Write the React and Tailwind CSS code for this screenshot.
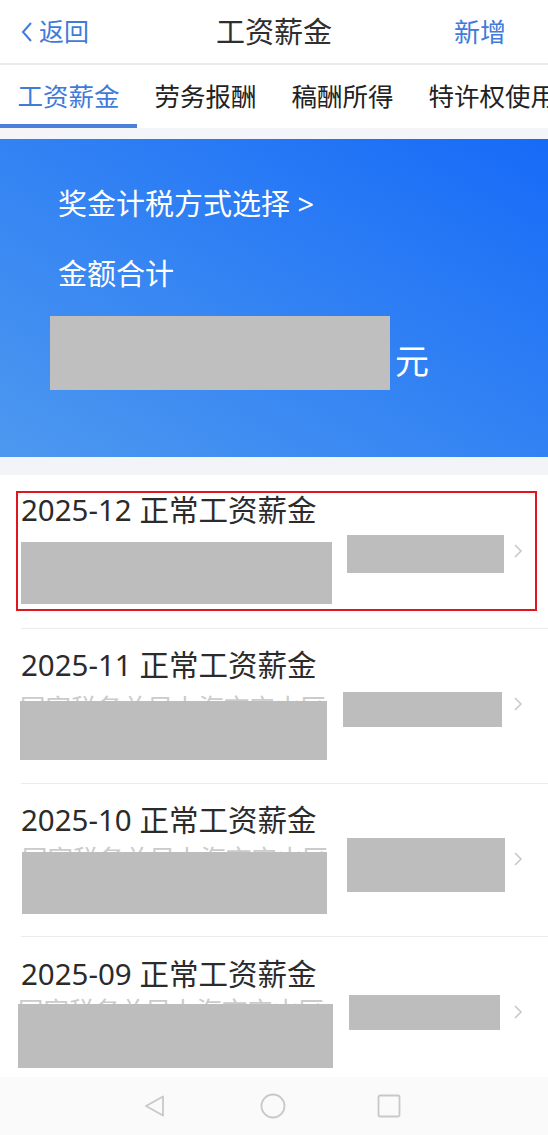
import React from "react";

const font = { fontFamily: '"Noto Sans", "Noto Sans CJK SC", sans-serif' };

const tabs = ["工资薪金", "劳务报酬", "稿酬所得", "特许权使用费所得"];

// per-row spacing of the masked cells
const rows = [
  {
    month: "2025-12",
    wrap: "h-[153px] pt-[20px]",
    peek: false,
    col: "mt-[17px] ml-0",
    left: "w-[311px] h-[62px]",
    right: "mt-[10px] ml-[15px] w-[157px] h-[38px]",
    arrow: "mt-[18px]",
  },
  {
    month: "2025-11",
    wrap: "h-[154px] pt-[21px]",
    peek: true,
    col: "mt-[15px] ml-[-1px]",
    left: "w-[307px] h-[59px]",
    right: "mt-[12px] ml-[16px] w-[159px] h-[35px]",
    arrow: "mt-[16px]",
  },
  {
    month: "2025-10",
    wrap: "h-[152px] pt-[21px]",
    peek: true,
    col: "mt-[11px] ml-[1px]",
    left: "w-[305px] h-[62px]",
    right: "mt-[3px] ml-[19px] w-[158px] h-[54px]",
    arrow: "mt-[16px]",
  },
  {
    month: "2025-09",
    wrap: "h-[150px] pt-[22px]",
    peek: true,
    col: "mt-[9px] ml-[-3px]",
    left: "w-[315px] h-[64px]",
    right: "mt-[6px] ml-[16px] w-[151px] h-[35px]",
    arrow: "mt-[15px]",
  },
];

function Chevron({ className }) {
  return (
    <svg width="11" height="16" viewBox="0 0 11 16" className={className}>
      <path d="M2 2l6 6-6 6" fill="none" stroke="#c9c9c9" strokeWidth="1.6" />
    </svg>
  );
}

function Row({ row, first }) {
  return (
    <div className={`relative flex flex-col pl-[21px] ${row.wrap}`}>
      <div className="text-[29.5px] leading-none text-[#2b2b2b]">
        {row.month} 正常工资薪金
      </div>
      <div className="flex items-start">
        <div className={`flex flex-col ${row.col}`}>
          {/* sub line mostly hidden under the mask */}
          <div
            className={`overflow-hidden whitespace-nowrap text-[25.5px] leading-none text-[#cbcbcb] ${
              row.peek ? "h-[6px]" : "h-0"
            }`}
          >
            {row.peek ? "国家税务总局上海市宝山区" : ""}
          </div>
          <div className={`bg-[#bdbdbd] ${row.left}`} />
        </div>
        <div className={`bg-[#bdbdbd] ${row.right}`} />
        <Chevron className={`ml-auto mr-[24px] ${row.arrow}`} />
      </div>
      {first && (
        <div className="pointer-events-none absolute left-[16px] top-[16px] h-[120px] w-[521px] border-2 border-[#e0161e]" />
      )}
    </div>
  );
}

export default function App() {
  return (
    <div className="flex h-[1135px] w-[548px] flex-col overflow-hidden bg-white" style={font}>
      {/* top bar */}
      <div className="grid h-[65px] flex-none grid-cols-[1fr_auto_1fr] items-center border-b-2 border-[#ebebeb]">
        <div className="flex items-center pl-[20px] text-[25px] text-[#3f7bd9]">
          <svg width="14" height="22" viewBox="0 0 14 22" className="mr-[5px]">
            <path d="M11 2L3 11l8 9" fill="none" stroke="#3f7bd9" strokeWidth="2" />
          </svg>
          <span className="leading-none">返回</span>
        </div>
        <div className="text-[29px] leading-none text-[#2f2f2f]">工资薪金</div>
        <div className="justify-self-end pr-[42px] text-[26px] leading-none text-[#3f7bd9]">新增</div>
      </div>

      {/* category tabs */}
      <div className="flex h-[63px] flex-none overflow-hidden">
        {tabs.map((t, i) => (
          <div
            key={t}
            className={`relative flex flex-none items-center whitespace-nowrap px-[17.5px] text-[25.5px] leading-none ${
              i === 0 ? "text-[#3f7bd9]" : "text-[#222222]"
            }`}
          >
            {t}
            {i === 0 && <div className="absolute bottom-0 left-0 h-[4px] w-full bg-[#4a80d9]" />}
          </div>
        ))}
      </div>
      <div className="h-[11px] flex-none bg-[#f3f5f9]" />

      {/* summary card */}
      <div className="flex h-[318px] flex-none flex-col bg-linear-to-tr from-[#4d98ef] to-[#166af7] pl-[50px] pt-[50px] text-white">
        <div className="pl-[8px] text-[29px] leading-none">奖金计税方式选择 &gt;</div>
        <div className="mt-[41px] pl-[8px] text-[29px] leading-none">金额合计</div>
        <div className="mt-[28px] flex items-end">
          <div className="h-[74px] w-[340px] bg-[#bfbfbf]" />
          <span className="mb-[12px] ml-[5px] text-[34px] leading-none">元</span>
        </div>
      </div>
      <div className="h-[18px] flex-none bg-[#f3f4f8]" />

      {/* monthly records */}
      <div className="flex-1 overflow-hidden">
        {rows.map((row, i) => (
          <div key={row.month}>
            {i > 0 && <div className="ml-[21px] h-px bg-[#ececec]" />}
            <Row row={row} first={i === 0} />
          </div>
        ))}
      </div>

      {/* system navigation */}
      <div className="flex h-[58px] flex-none items-center bg-[#fafafa]">
        <svg width="24" height="24" viewBox="0 0 24 24" className="ml-[143px]">
          <path d="M20 2.5L3 12l17 9.5z" fill="none" stroke="#c8c8c8" strokeWidth="1.8" strokeLinejoin="round" />
        </svg>
        <svg width="26" height="26" viewBox="0 0 26 26" className="ml-[93px]">
          <circle cx="13" cy="13" r="11.5" fill="none" stroke="#c8c8c8" strokeWidth="1.8" />
        </svg>
        <svg width="24" height="24" viewBox="0 0 24 24" className="ml-[91px]">
          <rect x="1.5" y="1.5" width="21" height="21" rx="1.5" fill="none" stroke="#c8c8c8" strokeWidth="1.8" />
        </svg>
      </div>
    </div>
  );
}
